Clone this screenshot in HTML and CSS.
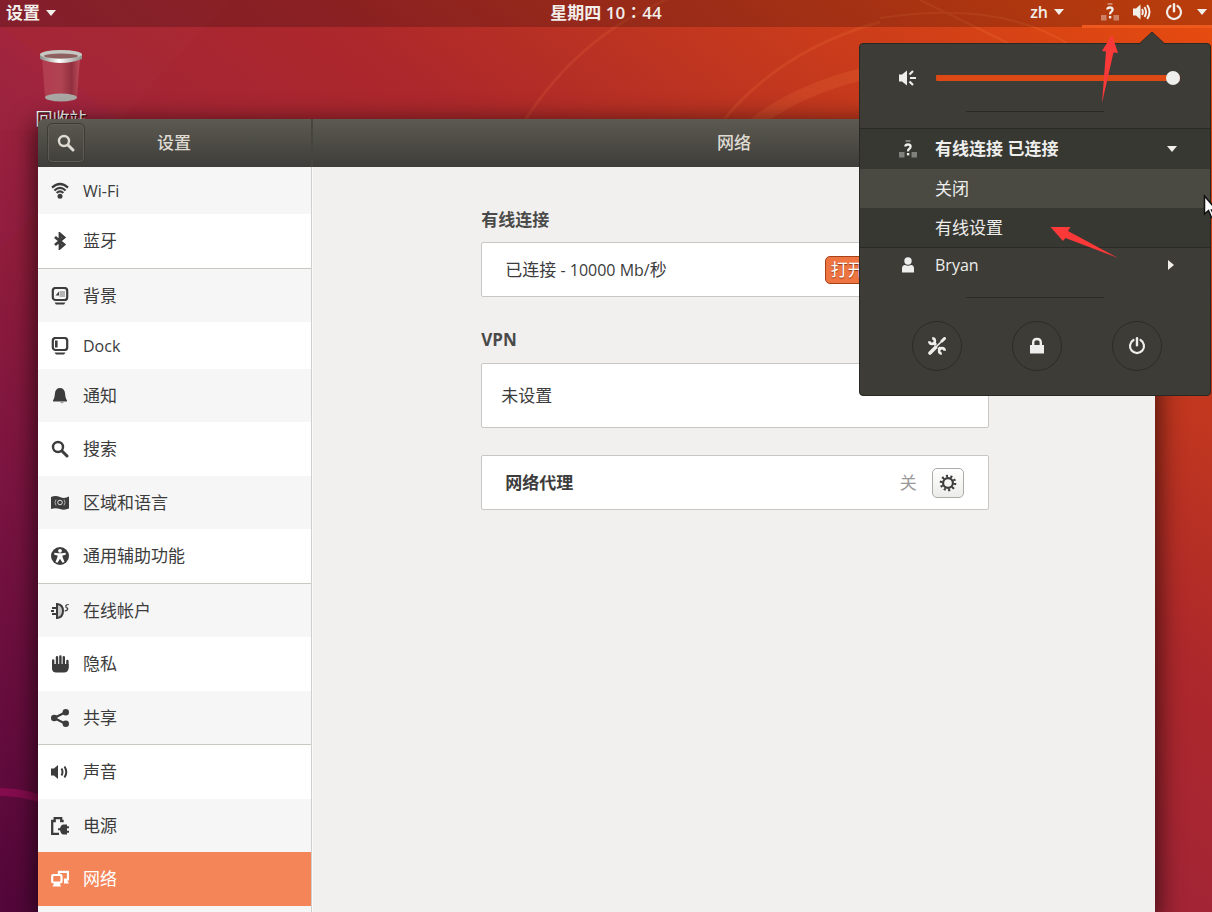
FILE: index.html
```html
<!DOCTYPE html>
<html lang="zh-CN">
<head>
<meta charset="utf-8">
<title>设置</title>
<meta name="viewport" content="width=device-width, initial-scale=1">
<link rel="stylesheet" href="styles.css">
</head>
<body>
<svg class="defs" width="0" height="0" aria-hidden="true">
  <symbol id="i-search" viewBox="0 0 18 18"><circle cx="7" cy="7" r="5" fill="none" stroke="currentColor" stroke-width="2.400"/><path d="M11 11l5 5" stroke="currentColor" stroke-width="3" stroke-linecap="round"/></symbol>
  <symbol id="i-wifi" viewBox="0 0 18 18"><g fill="none" stroke="currentColor" stroke-width="2.200"><path d="M1 5.600Q9-1.600 17 5.600"/><path d="M3.400 8.500Q9 3.400 14.600 8.500"/><path d="M5.700 11Q9 7.800 12.300 11"/></g><circle cx="9" cy="14.200" r="2.500" fill="currentColor"/></symbol>
  <symbol id="i-bt" viewBox="0 0 18 18"><path d="M4 5l9 7.500-4 3.500V2l4 3.500L4 13" fill="none" stroke="currentColor" stroke-width="2.800"/></symbol>
  <symbol id="i-bg" viewBox="0 0 18 18"><rect x="1.800" y="1" width="14.400" height="12" rx="2.800" fill="none" stroke="currentColor" stroke-width="2.200"/><path d="M3.500 15.500h11L13 17.500H5z" fill="currentColor"/><path d="M8.500 4h5.500v6H8.500z" fill="currentColor" opacity=".35"/><path d="M4.500 8.500l3.500-4v4z" fill="currentColor"/></symbol>
  <symbol id="i-dock" viewBox="0 0 18 18"><rect x="1.800" y="1" width="14.400" height="12" rx="2.800" fill="none" stroke="currentColor" stroke-width="2.200"/><path d="M4 3.500h2.600v7H4zM3.500 15.500h11L13 17.500H5z" fill="currentColor"/></symbol>
  <symbol id="i-bell" viewBox="0 0 18 18"><path d="M9 1C6 1 4.300 3 4 6S3.500 11 2 13.500V14.500h14v-1C14.500 11 14.300 9 14 6S12 1 9 1z" fill="currentColor"/><path d="M9 15h4l-2 1.500z" fill="currentColor" opacity=".5"/></symbol>
  <symbol id="i-flag" viewBox="0 0 18 18"><path d="M0 3q4.500-2 9 0t9-.500V14.500q-4.500 2-9 .500T0 15z" fill="currentColor"/><circle cx="9" cy="8.500" r="2.300" fill="none" stroke="#ddd"/><path d="M5 5.500q-2 3 0 6M13 5.500q2 3 0 6" fill="none" stroke="#aaa"/></symbol>
  <symbol id="i-access" viewBox="0 0 18 18"><circle cx="9" cy="9" r="9" fill="currentColor"/><circle cx="9" cy="3.800" r="1.900" fill="#fff"/><path d="M3.300 5.800l4 .500h3.400l4-.500v2L11.500 8.600V10l2 5-2 .700L9 11.800 6.500 15.700 4.500 15l2-5V8.600L3.300 7.800z" fill="#fff"/></symbol>
  <symbol id="i-online" viewBox="0 0 18 18"><path d="M6 2q6 .500 6 7T6 16z" fill="currentColor" fill-opacity=".25" stroke="currentColor" stroke-width="2"/><path d="M1 6h5M1 12h5M0 9h3" stroke="currentColor" stroke-width="2"/><path d="M17.800 2.500q-3 0-3 1.800t1.800 1.700q.800 2.500-3 3" fill="none" stroke="currentColor" stroke-width="1.200"/></symbol>
  <symbol id="i-hand" viewBox="0 0 18 18"><path d="M2.200 5.500v7M6 2.200v9M9.400 1.500v10M12.800 2.200v9M16.400 6v6" stroke="currentColor" stroke-width="2.400" stroke-linecap="round"/><path d="M1 9h16.600v4.500q-.600 4-4.600 4H5q-3.400 0-4-3.500z" fill="currentColor"/></symbol>
  <symbol id="i-share" viewBox="0 0 18 18"><path d="M15 3 3 9l12 6" fill="none" stroke="currentColor" stroke-width="2.200"/><g fill="currentColor"><circle cx="14.800" cy="3.200" r="3.200"/><circle cx="3.200" cy="9" r="3.200"/><circle cx="14.800" cy="14.800" r="3.200"/></g></symbol>
  <symbol id="i-sound" viewBox="0 0 18 18"><path d="M0 5.500h3l4-3.500v14l-4-3.500H0z" fill="currentColor"/><path d="M10.500 5.500q2 3.500 0 7M13.500 3.500q3.600 5.500 0 11" fill="none" stroke="currentColor" stroke-width="2"/></symbol>
  <symbol id="i-power" viewBox="0 0 18 18"><path d="M8 17H1.200V4h2.500V1.200h6.500V4h2.500" fill="none" stroke="currentColor" stroke-width="2.300"/><path d="M7 11.300h2Q10 7.500 12.500 7.500H16V9.300h2v2h-2v2.500h2v2h-2v1.700h-3.500Q10 17.500 9 13.300H7z" fill="currentColor"/></symbol>
  <symbol id="i-net" viewBox="0 0 18 18"><g fill="none" stroke="currentColor" stroke-width="2.200"><rect x="1.200" y="5" width="9.300" height="7.500" rx="1"/><path d="M8 4V1.800h8.900v7.700h-4"/></g><path d="M3.500 13h5l1.500 3.500H1.500zM13 10h3l2 3.500h-5z" fill="currentColor"/></symbol>
  <symbol id="i-unknown" viewBox="0 0 18 18"><path d="M6.500 0h5v2h-5zM0 12h5.500v5.500H0zM12.500 12H18v5.500h-5.500z" fill="currentColor" opacity=".4"/><path d="M6.300 6.500Q6.500 4.500 9 4.500t2.600 2.100q0 1.400-1.300 2.200T9.100 11.400" fill="none" stroke="currentColor" stroke-width="2.300"/><path d="M7.900 13h2.400v2.400H7.900z" fill="currentColor"/></symbol>
  <symbol id="i-vol" viewBox="0 0 18 18"><path d="M0 5.500h3L7.500 1.500v15L3 12.500H0z" fill="currentColor"/><g fill="none" stroke="currentColor" stroke-width="2"><path d="M9 6q1.700 3 0 6M11.500 4q3 5 0 10M14.200 2q4.600 7 0 14"/></g></symbol>
  <symbol id="i-rays" viewBox="0 0 18 18"><path d="M0 5.500h3L8 1.500v15L3 12.500H0z" fill="currentColor"/><path d="M10.500 5.500 14 2M11 9h6M10.500 12.500 14 16" stroke="currentColor" stroke-width="2.200"/></symbol>
  <symbol id="i-off" viewBox="0 0 18 18"><path d="M5.500 3a7 7 0 1 0 7 0" fill="none" stroke="currentColor" stroke-width="2.200" stroke-linecap="round"/><path d="M9 1.200v7" stroke="currentColor" stroke-width="2.400" stroke-linecap="round"/></symbol>
  <symbol id="i-user" viewBox="0 0 18 18"><circle cx="9" cy="5" r="3.700" fill="currentColor"/><path d="M3 16.500v-4q0-3.500 3-3.500 3 1.500 6 0 3 0 3 3.500v4z" fill="currentColor"/></symbol>
  <symbol id="i-lock" viewBox="0 0 18 18"><path d="M2 8h14v8.500H2z" fill="currentColor"/><path d="M5.200 8V5.500q0-3.500 3.800-3.500t3.800 3.500V8" fill="none" stroke="currentColor" stroke-width="2.400"/></symbol>
  <symbol id="i-tools" viewBox="0 0 18 18"><path d="M2 16l5.500-5.500" stroke="currentColor" stroke-width="3.600" stroke-linecap="round"/><path d="M7 11l8-8" stroke="currentColor" stroke-width="1.600"/><path d="M14 4l2.500-2.500" stroke="currentColor" stroke-width="3" stroke-linecap="round"/><path d="M5.500 5.500l2.500 2.500M10.500 10.500l2 2" stroke="currentColor" stroke-width="3"/><path d="M4.200 1.300A2.800 2.800 0 1 1 1.300 4.200M16.700 13.800a2.800 2.800 0 1 0-2.900 2.900" fill="none" stroke="currentColor" stroke-width="2.600"/></symbol>
  <symbol id="i-gear" viewBox="0 0 18 18"><circle cx="9" cy="9" r="4.900" fill="none" stroke="currentColor" stroke-width="2.200"/><circle cx="9" cy="9" r="7" fill="none" stroke="currentColor" stroke-width="2.600" stroke-dasharray="2 2.398"/></symbol>
</svg>

<div class="desktop">
  <svg class="wallpaper" viewBox="0 0 1212 912" preserveAspectRatio="none" aria-hidden="true">
    <path d="M0 26 120 120 0 250z" fill="#a0209a" opacity=".06"/>
    <path d="M230 0 110 130H0V0z" fill="#fff" opacity=".012"/>
    <path d="M0 788q20 0 38 6v8q-18-6-38-6z" fill="#c0106a" opacity=".4"/>
    <g fill="none" stroke="#ff8a4a"><path d="M525 120Q590 20 700-12" stroke-width="3" opacity=".13"/><path d="M722 122Q780 50 880 22" stroke-width="3" opacity=".15"/><path d="M748 128Q800 86 880 70" stroke-width="12" opacity=".15"/><path d="M880 18Q1000 0 1070 45M920 0 1010 44" stroke-width="2" opacity=".18"/></g>
  </svg>

  <header class="topbar">
    <button class="bar-btn app-menu">设置<span class="caret"></span></button>
    <button class="bar-btn">星期四 10∶44</button>
    <div class="tray">
      <button class="bar-btn lang">zh<span class="caret"></span></button>
      <button class="bar-btn status" aria-label="系统菜单" aria-expanded="true">
        <svg class="ic"><use href="#i-unknown"/></svg>
        <svg class="ic"><use href="#i-vol"/></svg>
        <svg class="ic"><use href="#i-off"/></svg>
        <span class="caret"></span>
      </button>
    </div>
  </header>

  <div class="trash">
    <svg width="44" height="54" viewBox="0 0 44 54" aria-hidden="true">
      <defs><linearGradient id="bin"><stop offset="0" stop-color="#b23c50"/><stop offset=".5" stop-color="#b04452"/><stop offset=".78" stop-color="#92303f"/><stop offset="1" stop-color="#bd4c5b"/></linearGradient>
      <linearGradient id="rim"><stop offset="0" stop-color="#888b85"/><stop offset=".45" stop-color="#fff"/><stop offset="1" stop-color="#8c8f88"/></linearGradient></defs>
      <path d="M3 9 6 48q16 7 32 0l3-39z" fill="url(#bin)"/>
      <ellipse cx="22" cy="48.500" rx="16" ry="4" fill="#aaa9a5"/>
      <path d="M1 5v5q21 8 42 0V5z" fill="url(#rim)"/>
      <ellipse cx="22" cy="5.500" rx="21" ry="4.500" fill="#c5c7c2"/>
      <ellipse cx="22" cy="7" rx="17" ry="2.500" fill="#8f6060"/>
    </svg>
    <span>回收站</span>
  </div>

  <main class="window">
    <div class="titlebar">
      <div class="title-left"><button class="search-btn" aria-label="搜索"><svg class="ic"><use href="#i-search"/></svg></button><h1>设置</h1></div>
      <h2>网络</h2>
    </div>
    <div class="body">
      <nav class="sidebar">
        <ul>
          <li class="latin"><a href="#wifi"><svg class="ic"><use href="#i-wifi"/></svg>Wi-Fi</a></li>
          <li class="end"><a href="#bt"><svg class="ic"><use href="#i-bt"/></svg>蓝牙</a></li>
          <li><a href="#bg"><svg class="ic"><use href="#i-bg"/></svg>背景</a></li>
          <li class="latin"><a href="#dock"><svg class="ic"><use href="#i-dock"/></svg>Dock</a></li>
          <li><a href="#notify"><svg class="ic"><use href="#i-bell"/></svg>通知</a></li>
          <li><a href="#search"><svg class="ic"><use href="#i-search"/></svg>搜索</a></li>
          <li><a href="#region"><svg class="ic"><use href="#i-flag"/></svg>区域和语言</a></li>
          <li class="end"><a href="#access"><svg class="ic"><use href="#i-access"/></svg>通用辅助功能</a></li>
          <li><a href="#online"><svg class="ic"><use href="#i-online"/></svg>在线帐户</a></li>
          <li><a href="#privacy"><svg class="ic"><use href="#i-hand"/></svg>隐私</a></li>
          <li class="end"><a href="#share"><svg class="ic"><use href="#i-share"/></svg>共享</a></li>
          <li><a href="#sound"><svg class="ic"><use href="#i-sound"/></svg>声音</a></li>
          <li><a href="#power"><svg class="ic"><use href="#i-power"/></svg>电源</a></li>
          <li class="active"><a href="#net" aria-current="page"><svg class="ic"><use href="#i-net"/></svg>网络</a></li>
          <li></li>
        </ul>
      </nav>
      <section class="panel">
        <div class="column">
          <h3>有线连接</h3>
          <div class="card"><span>已连接<span class="num"> - 10000 Mb/</span>秒</span><button class="switch" role="switch" aria-checked="true" aria-label="有线连接">打开<span class="knob"></span></button></div>
          <h3 class="vpn">VPN</h3>
          <div class="card tall">未设置</div>
          <div class="card proxy"><strong>网络代理</strong><span class="right"><span class="muted">关</span><button class="gear" aria-label="网络代理设置"><svg class="ic"><use href="#i-gear"/></svg></button></span></div>
        </div>
      </section>
    </div>
  </main>

  <aside class="menu">
    <svg class="menu-tip" viewBox="0 0 28 14" aria-hidden="true"><path d="M0 14 14 1l14 13" fill="#3d3c37" stroke="#2b2b27"/></svg>
    <div class="volume"><svg class="ic"><use href="#i-rays"/></svg><input type="range" min="0" max="100" value="100" aria-label="音量"></div>
    <hr>
    <div class="wired">
      <button class="item bold"><svg class="ic"><use href="#i-unknown"/></svg><span>有线连接 已连接</span><i class="caret"></i></button>
      <button class="item sub hover"><span>关闭</span></button>
      <button class="item sub"><span>有线设置</span></button>
    </div>
    <button class="item user"><svg class="ic"><use href="#i-user"/></svg><span>Bryan</span><i class="caret side"></i></button>
    <hr>
    <div class="actions">
      <button aria-label="设置"><svg class="ic"><use href="#i-tools"/></svg></button>
      <button aria-label="锁定"><svg class="ic"><use href="#i-lock"/></svg></button>
      <button aria-label="关机"><svg class="ic"><use href="#i-off"/></svg></button>
    </div>
  </aside>

  <svg class="marks" width="180" height="240" viewBox="1032 30 180 240" aria-hidden="true">
    <path d="M1112 35 1102 51 1106 51.500 1102 103 1113.500 52.500 1118 53z" fill="#fc3939"/>
    <path d="M1050.500 227h20l-2.500 4 50 27-52.500-20-2.500 3z" fill="#fc3939"/>
    <path d="M1204.500 196v18l4-3.500 3 7 3-1.500-3-6h5z" fill="#fff" stroke="#111" stroke-width="1.500"/>
  </svg>
</div>
</body>
</html>
```
FILE: styles.css
```css
* { box-sizing: border-box; }

body {
  margin: 0;
  font: 17px/24px "Open Sans", "Noto Sans CJK SC", sans-serif;
  color: #3c3c3c;
}

button { font: inherit; color: inherit; background: none; border: 0; padding: 0; }
h1, h2, h3, ul { margin: 0; padding: 0; }
.defs { position: absolute; }
.ic { width: 18px; height: 18px; flex: none; }

.desktop {
  position: relative;
  height: 100vh;
  overflow: hidden;
  background: linear-gradient(to top right, #52063a 0%, #7b1440 24%, #a22436 48%, #ad282b 63%, #be3520 75%, #d03f18 86%, #e94d0e 100%);
}
.wallpaper { position: absolute; inset: 0; width: 100%; height: 100%; }

/* top bar */
.topbar {
  position: relative;
  display: grid;
  grid-template-columns: 1fr auto 1fr;
  height: 27px;
  background: rgba(0, 0, 0, .2);
  color: #f2eeea;
  font-size: 17px;
  font-weight: 600;
}
.bar-btn { display: flex; align-items: center; gap: 6px; padding-bottom: 2px; }
.app-menu { padding-left: 6px; }
.tray { display: flex; justify-content: flex-end; }
.lang { padding-right: 18px; padding-bottom: 4px; font-size: 16px; }
.status { gap: 14px; padding: 0 5px 2px 19px; border-bottom: 3px solid #ee5a1e; }
.caret {
  flex: none;
  width: 0;
  height: 0;
  border: 5px solid transparent;
  border-top: 6px solid #f2eeea;
  border-bottom: 0;
}
.caret.side { border: 5px solid transparent; border-left: 6px solid #f2eeea; border-right: 0; }

.trash {
  position: absolute;
  left: 30px;
  top: 49px;
  width: 62px;
  display: flex;
  flex-direction: column;
  align-items: center;
  gap: 4px;
  color: #fff;
  text-shadow: 1px 1px 1px #000;
}

/* settings window */
.window {
  position: absolute;
  left: 38px;
  right: 57px;
  top: 119px;
  bottom: 0;
  display: flex;
  flex-direction: column;
  border-radius: 6px 6px 0 0;
  box-shadow: 0 6px 24px 4px rgba(0, 0, 0, .6);
  overflow: hidden;
}
.titlebar {
  flex: none;
  display: grid;
  grid-template-columns: 275px 1fr;
  height: 48px;
  background: linear-gradient(#5c5a51, #3e3d39);
  color: #dfdbd2;
}
.titlebar h1, .titlebar h2 { font-size: 17px; font-weight: 500; line-height: 48px; text-align: center; }
.title-left { display: grid; grid-template-columns: 38px 1fr 38px; padding: 0 10px 0 9px; align-items: center; border-right: 2px solid #46453f; }
.search-btn {
  display: grid;
  place-items: center;
  width: 38px;
  height: 40px;
  border: 1px solid #3c3b37;
  border-radius: 5px;
  box-shadow: inset 0 0 0 1px #5e5c54;
}
.body { flex: 1; display: grid; grid-template-columns: 274px 1fr; min-height: 0; }
.sidebar { background: #fff; border-right: 1px solid #d0cfcc; overflow: hidden; }
.sidebar ul { list-style: none; }
.sidebar li { height: 53px; background: #f6f6f6; }
.sidebar li:nth-child(even) { height: 54px; background: #fff; }
.sidebar li.latin, .sidebar li.latin:nth-child(even) { height: 47px; font-size: 16px; }
.sidebar li.end { height: 54px; border-bottom: 1px solid #cbc7c2; }
.sidebar li.end:nth-child(even) { height: 55px; }
.sidebar li.active:nth-child(even) { background: #f38559; color: #fff; }
.sidebar a { display: flex; align-items: center; gap: 14px; height: 100%; padding-left: 13px; color: inherit; text-decoration: none; }

.panel { background: #f1f0ee; border-left: 1px solid #fafafa; padding-left: 2px; }
.column { width: 60.4%; margin: 0 auto; padding-top: 41px; }
.column h3 { font-size: 17px; font-weight: 700; color: #4a4a4a; }
.column .vpn { padding-top: 31px; }
.card {
  display: flex;
  align-items: center;
  justify-content: space-between;
  height: 55px;
  margin-top: 10px;
  padding: 0 24px 0 23px;
  background: #fff;
  border: 1px solid #c8c7c5;
  border-radius: 2px;
}
.card.tall { height: 65px; margin-top: 11px; padding: 0 19px; }
.card.proxy { margin-top: 27px; }
.num { font-size: 16px; }
.right { display: flex; align-items: center; gap: 15px; }
.muted { color: #999; }
.switch {
  display: flex;
  align-items: center;
  justify-content: space-between;
  width: 139px;
  height: 28px;
  padding: 0 0 0 5px;
  color: #fff;
  background: #ee7442;
  border: 1px solid #a6411a;
  border-radius: 5px;
  text-shadow: 0 1px 1px #8c3a1c;
}
.knob { width: 66px; height: 26px; background: #f7f6f5; border-radius: 4px; }
.gear {
  display: grid;
  place-items: center;
  width: 32px;
  height: 30px;
  border: 1px solid #adaba8;
  border-radius: 5px;
  background: linear-gradient(#fff, #ececea);
}

/* system menu */
.menu {
  position: absolute;
  top: 43px;
  right: 1px;
  width: 352px;
  background: #3d3c37;
  border: 1px solid #282824;
  border-radius: 4px;
  color: #eeeeec;
  padding-bottom: 24px;
}
.menu-tip { position: absolute; right: 44px; top: -13px; width: 28px; height: 14px; }
.volume { display: grid; grid-template-columns: 18px 1fr; gap: 19px; align-items: center; padding: 25px 30px 0 39px; }
.volume input {
  appearance: none;
  width: 100%;
  height: 18px;
  margin: 0;
  border-radius: 8px;
  background: linear-gradient(#dd4814, #dd4814) center / 100% 6px no-repeat;
}
.volume input::-webkit-slider-thumb { appearance: none; width: 14px; height: 14px; border-radius: 50%; background: #eeeeec; }
.menu hr { width: 138px; height: 1px; margin: 24px auto 16px; border: 0; background: #2a2a26; }
.wired { background: #383832; border-top: 1px solid #2a2a26; border-bottom: 1px solid #2a2a26; }
.item {
  display: grid;
  grid-template-columns: 18px 1fr auto;
  gap: 18px;
  align-items: center;
  width: 100%;
  height: 40px;
  padding: 0 33px 0 39px;
  text-align: left;
}
.item.bold { font-weight: 700; }
.item.sub { height: 39px; }
.item.sub span { grid-column: 2; }
.item.hover { background: #4a4a43; }
.item.user { height: 34px; font-size: 16px; padding-right: 36px; }
.actions { display: flex; justify-content: space-between; padding: 7px 48px 0 52px; }
.menu hr ~ hr { margin-top: 15px; }
.actions button {
  display: grid;
  place-items: center;
  width: 50px;
  height: 50px;
  border: 1px solid #2c2c28;
  border-radius: 50%;
}

.marks { position: absolute; right: 0; top: 30px; pointer-events: none; }
```
